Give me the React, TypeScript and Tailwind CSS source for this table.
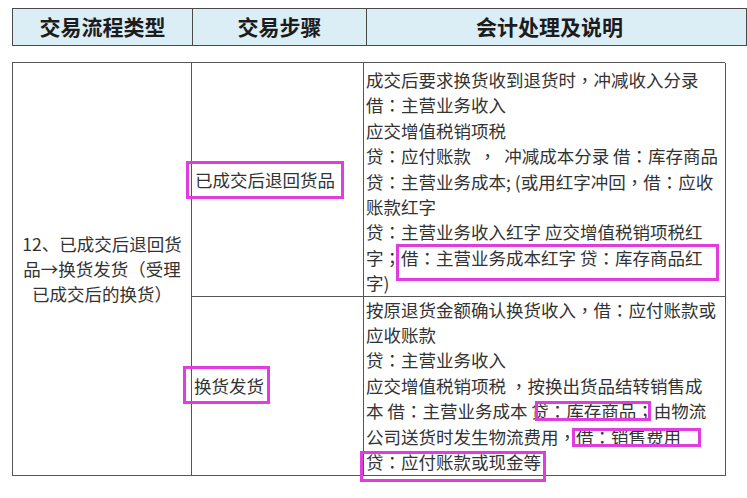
import React from "react";

const font = "font-['Noto_Sans_CJK_SC','Noto_Sans',sans-serif]";

const row1 = [
  "成交后要求换货收到退货时，冲减收入分录",
  "借：主营业务收入",
  "应交增值税销项税",
  "贷：应付账款  ，  冲减成本分录 借：库存商品",
  "贷：主营业务成本; (或用红字冲回，借：应收",
  "账款红字",
  "贷：主营业务收入红字 应交增值税销项税红",
  "字；借：主营业务成本红字 贷：库存商品红",
  "字)",
];

const row2 = [
  "按原退货金额确认换货收入，借：应付账款或",
  "应收账款",
  "贷：主营业务收入",
  "应交增值税销项税 ，按换出货品结转销售成",
  "本 借：主营业务成本 贷：库存商品；由物流",
  "公司送货时发生物流费用，借：销售费用",
  "贷：应付账款或现金等",
];

function T({ text }: { text: string }) {
  const parts = text.split(/([，：；])/);
  return (
    <>
      {parts.map((p, i) =>
        /^[，：；]$/.test(p) ? (
          <span key={i} className="font-['Noto_Sans_CJK_TC',sans-serif]">
            {p}
          </span>
        ) : (
          <React.Fragment key={i}>{p}</React.Fragment>
        )
      )}
    </>
  );
}

function Lines({ lines }: { lines: string[] }) {
  return (
    <>
      {lines.map((l, i) => (
        <div key={i} className="whitespace-pre">
          <T text={l} />
        </div>
      ))}
    </>
  );
}

export default function App() {
  return (
    <div className={`relative w-[747px] h-[498px] bg-white overflow-hidden ${font}`}>
      {/* header */}
      <div className="pt-[8px] pl-[12px]">
        <div className="grid grid-cols-[180px_174px_365px] h-[38px] border border-[#4a4a4a] bg-[#dbedf5] text-[21px] font-bold text-[#1c1c1c]">
          <div className="flex items-center justify-center border-r border-[#4a4a4a]">交易流程类型</div>
          <div className="flex items-center justify-center border-r border-[#4a4a4a]">交易步骤</div>
          <div className="flex items-center justify-center">会计处理及说明</div>
        </div>
      </div>

      {/* body */}
      <div className="mt-[16px] ml-[12px] w-[713px] grid grid-cols-[179px_172px_362px] border-l border-t border-[#555] text-[17.5px] leading-[25.4px] text-[#333]">
        <div className="row-span-2 flex items-center justify-center text-center border-r border-b border-[#555]">
          <div>
            <div>12、已成交后退回货</div>
            <div>品→换货发货（受理</div>
            <div>已成交后的换货）</div>
          </div>
        </div>
        <div className="flex items-center pl-[3px] border-r border-b border-[#555]">已成交后退回货品</div>
        <div className="pt-[4px] pl-[2px] border-r border-b border-[#555]">
          <Lines lines={row1} />
        </div>
        <div className="flex items-center pl-[2px] border-r border-b border-[#555]">换货发货</div>
        <div className="pl-[2px] border-r border-b border-[#555]">
          <Lines lines={row2} />
        </div>
      </div>

      {/* magenta annotation boxes */}
      <div className="absolute left-[186px] top-[161px] w-[158px] h-[38px] border-[3px] border-[#e03ce0]" />
      <div className="absolute left-[396px] top-[244px] w-[323px] h-[37px] border-[3px] border-[#e03ce0]" />
      <div className="absolute left-[183px] top-[366px] w-[87px] h-[38px] border-[3px] border-[#e03ce0]" />
      <div className="absolute left-[535px] top-[401px] w-[116px] h-[20px] border-[3px] border-[#e03ce0]" />
      <div className="absolute left-[572px] top-[428px] w-[129px] h-[19px] border-[3px] border-[#e03ce0]" />
      <div className="absolute left-[360px] top-[451px] w-[186px] h-[31px] border-[3px] border-[#e03ce0]" />
    </div>
  );
}
